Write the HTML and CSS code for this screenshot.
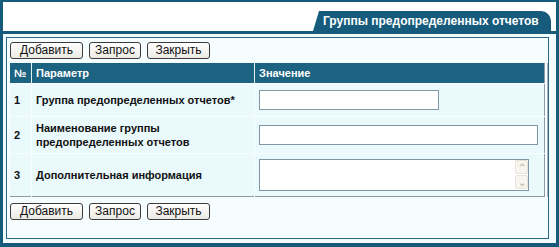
FILE: index.html
```html
<!DOCTYPE html>
<html lang="ru">
<head>
    <meta charset="UTF-8">
    <title>Группы предопределенных отчетов</title>
    <link rel="stylesheet" href="styles.css">
</head>
<body>
<div class="frame">
    <div class="head">
        <div class="tab">Группы предопределенных отчетов</div>
    </div>
    <div class="body">
        <div class="box">
            <div class="actions">
                <button type="button" class="btn-add">Добавить</button>
                <button type="button" class="btn-query">Запрос</button>
                <button type="button" class="btn-close">Закрыть</button>
            </div>

            <table class="grid">
                <thead>
                    <tr>
                        <th class="num">№</th>
                        <th class="param">Параметр</th>
                        <th>Значение</th>
                    </tr>
                </thead>
                <tbody>
                    <tr>
                        <td class="num">1</td>
                        <td class="param">Группа предопределенных отчетов*</td>
                        <td><input type="text" class="short"></td>
                    </tr>
                    <tr>
                        <td class="num">2</td>
                        <td class="param">Наименование группы<br>предопределенных отчетов</td>
                        <td><input type="text" class="long"></td>
                    </tr>
                    <tr>
                        <td class="num">3</td>
                        <td class="param">Дополнительная информация</td>
                        <td>
                            <div class="memo">
                                <textarea></textarea>
                                <span class="spin">
                                    <span class="arrow">&#8963;</span>
                                    <span class="arrow">&#8964;</span>
                                </span>
                            </div>
                        </td>
                    </tr>
                </tbody>
            </table>

            <div class="actions">
                <button type="button" class="btn-add">Добавить</button>
                <button type="button" class="btn-query">Запрос</button>
                <button type="button" class="btn-close">Закрыть</button>
            </div>
        </div>
    </div>
</div>
</body>
</html>
```

FILE: styles.css
```css
body {
    margin: 0;
    padding: 0;
    font-family: 'Liberation Sans', Arial, sans-serif;
    background: #f2fbfd;
}
.frame {
    width: 559px;
    height: 247px;
    box-sizing: border-box;
    border: 3px solid #165b7c;
    border-top-width: 2px;
    border-bottom-width: 4px;
    background: #f2fbfd;
}
.head {
    height: 29px;
    background: #ffffff;
    border-bottom: 3px solid #165b7c;
    display: flex;
    justify-content: flex-end;
    align-items: flex-end;
}
.tab {
    width: 238px;
    height: 20px;
    margin-right: 5px;
    box-sizing: border-box;
    padding-left: 10px;
    line-height: 20px;
    background: #165b7c;
    color: #ffffff;
    font-size: 12px;
    font-weight: bold;
    border-top-right-radius: 10px;
    clip-path: polygon(6px 0, 100% 0, 100% 100%, 0 100%);
}
.body {
    padding: 3px 7px 4px 3px;
}
.box {
    height: 202px;
    box-sizing: border-box;
    border: 1px solid #2a6685;
    background: #f6fdfe;
    padding: 4px 3px 0 3px;
}
.actions {
    display: flex;
    gap: 6px;
}
.actions button {
    height: 17px;
    padding: 0;
    font-family: 'Liberation Sans', Arial, sans-serif;
    font-size: 12px;
    color: #111;
    background: linear-gradient(#ffffff, #eceae4);
    border: 1px solid #3c3c3c;
    border-radius: 3px;
    line-height: 15px;
}
.actions .btn-add {
    width: 73px;
}
.actions .btn-query {
    width: 52px;
}
.actions .btn-close {
    width: 63px;
}
.grid {
    width: 535px;
    margin: 4px 0 6px 0;
    border-collapse: collapse;
    font-size: 11px;
    border-right: 1px solid #8d9ba1;
    border-bottom: 1px solid #8d9ba1;
    box-shadow: 2px 0 0 #f6fdfe, 3px 0 0 #a9b6bb;
}
.grid th {
    height: 20px;
    padding: 0 4px;
    text-align: left;
    background: #1c6281;
    color: #ffffff;
    font-weight: bold;
    border-left: 1px solid #e6f2f6;
}
.grid th:first-child {
    border-left: none;
}
.grid td {
    padding: 4px 4px;
    background: #e9f9fc;
    font-weight: bold;
    color: #111;
    line-height: 14px;
    border-top: 1px solid #f8feff;
    border-left: 1px solid #f8feff;
    vertical-align: middle;
}
.grid td:first-child {
    border-left: none;
}
.grid .num {
    width: 13px;
}
.grid .param {
    width: 214px;
}
.grid input {
    display: block;
    height: 20px;
    margin: 2px 0;
    box-sizing: border-box;
    border: 1px solid #7f97a4;
    background: #ffffff;
}
.grid input.short {
    width: 180px;
}
.grid input.long {
    width: 279px;
}
.memo {
    position: relative;
    width: 270px;
    margin: 1px 0;
}
.memo textarea {
    display: block;
    width: 270px;
    height: 32px;
    box-sizing: border-box;
    border: 1px solid #7f97a4;
    background: #ffffff;
    resize: none;
    overflow: hidden;
}
.spin {
    position: absolute;
    top: 1px;
    right: 1px;
    width: 13px;
    display: flex;
    flex-direction: column;
    gap: 1px;
}
.arrow {
    height: 14px;
    line-height: 14px;
    font-size: 10px;
    text-align: center;
    color: #c9c3b3;
    background: #f7f5ef;
    border: 1px solid #e7e3d8;
    box-sizing: border-box;
    border-radius: 2px;
}
```
